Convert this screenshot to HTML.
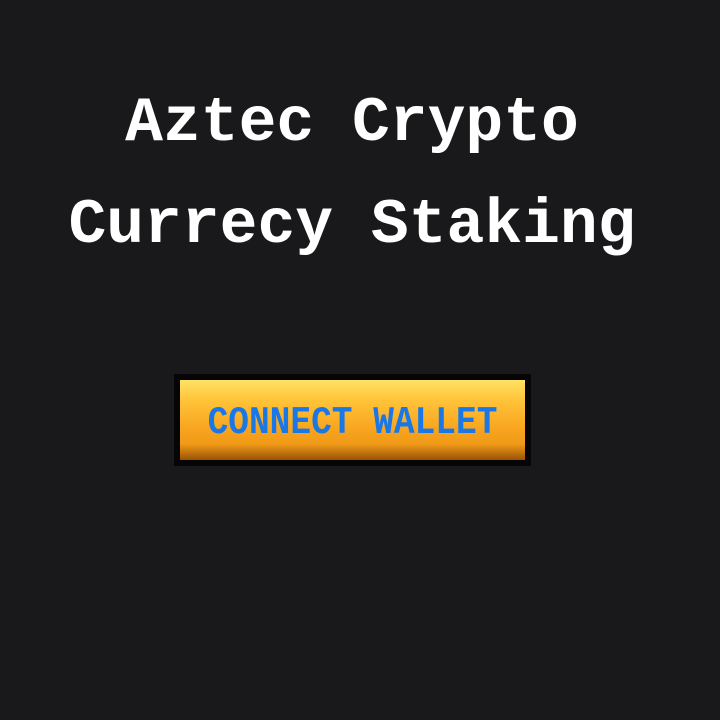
<!DOCTYPE html>
<html><head><style>
html,body{margin:0;padding:0;width:720px;height:720px;background:#19191b;overflow:hidden}
.t{position:absolute;left:-8px;width:720px;text-align:center;color:#fff;font-family:"Liberation Mono",monospace;font-weight:bold;font-size:63px;line-height:64px;white-space:pre}
.btn{position:absolute;left:174px;top:374px;width:345px;height:80px;border:6px solid #050505;
background:linear-gradient(#ffe266 0%,#ffc43a 25%,#f9a51f 60%,#f09a18 80%,#9a5208 100%)}
.bt{position:absolute;left:0;top:4px;width:345px;height:80px;line-height:80px;text-align:center;color:#1a78e6;font-family:"Liberation Mono",monospace;font-weight:bold;font-size:34.5px;transform:scaleY(1.12);white-space:pre}
</style></head><body>
<div class="t" style="top:92px">Aztec Crypto</div>
<div class="t" style="top:194px">Currecy Staking</div>
<div class="btn"><div class="bt">CONNECT WALLET</div></div>
</body></html>
